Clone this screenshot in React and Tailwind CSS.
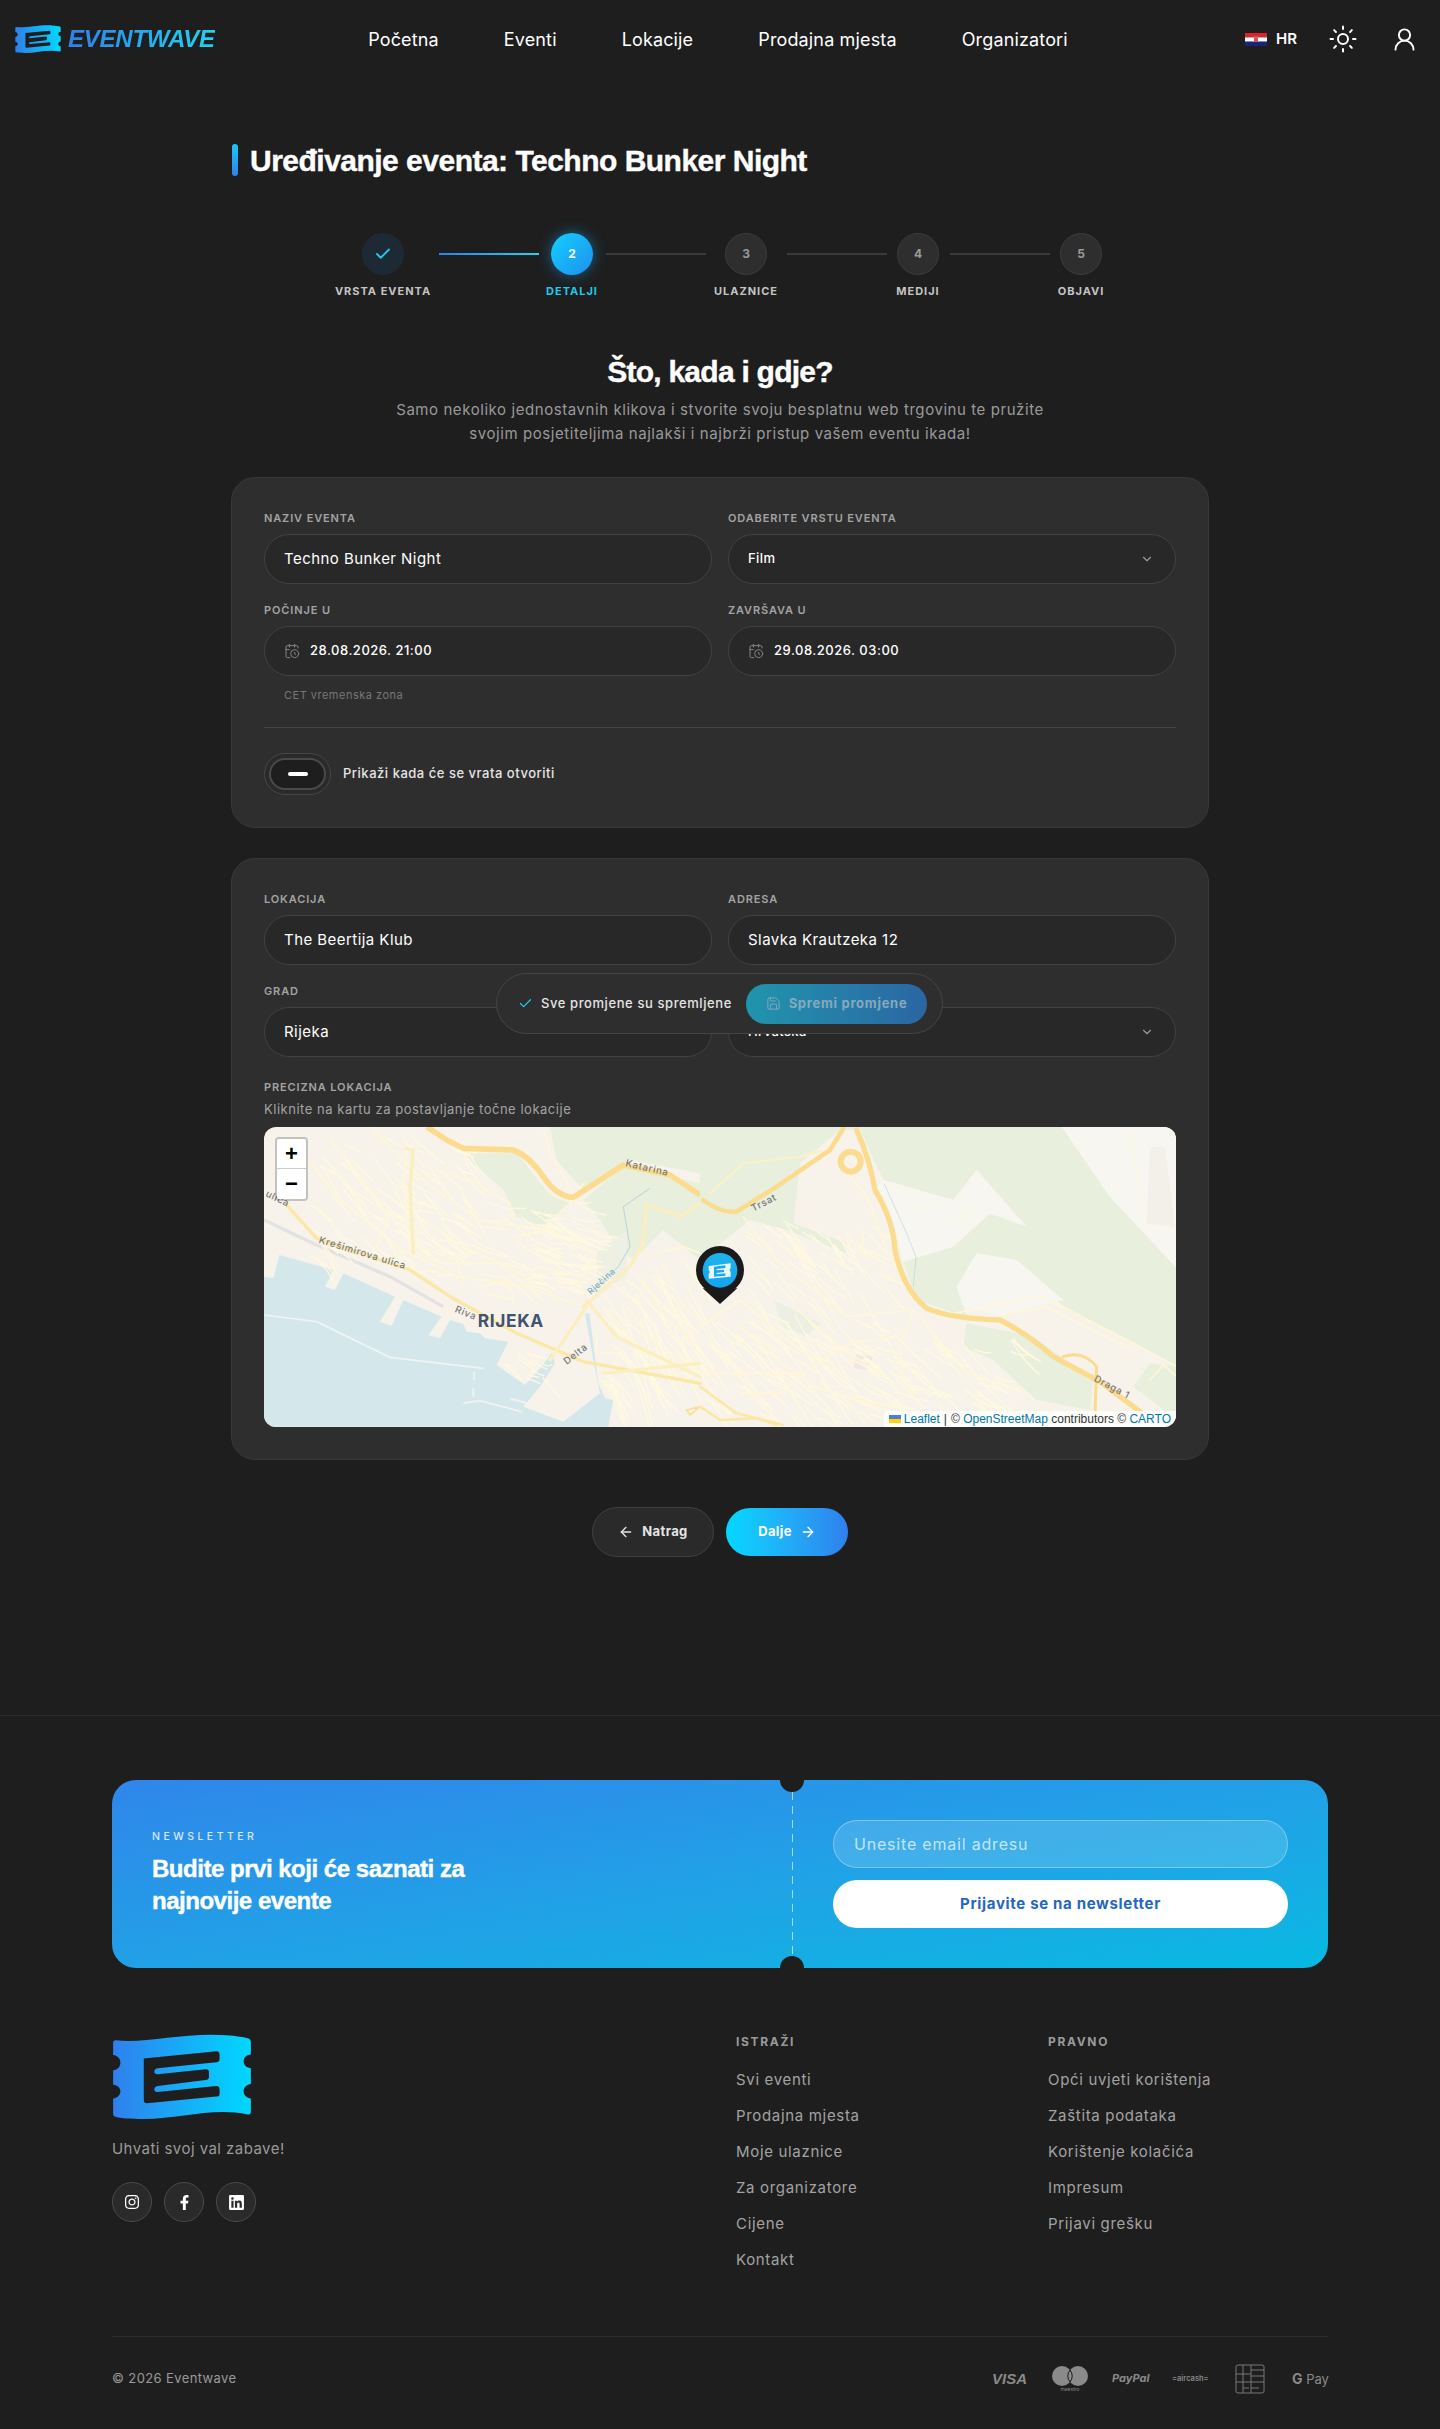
import React from 'react';
import { Sun, UserRound, Check, ChevronDown, CalendarClock, Save, ArrowLeft, ArrowRight } from 'lucide-react';
import { FaInstagram, FaFacebookF, FaLinkedin } from 'react-icons/fa';

const headingFont = "[font-family:'Liberation_Sans',sans-serif] [-webkit-text-stroke:0.4px_white]";

const steps = [
  { label: 'VRSTA EVENTA', state: 'done', width: 'w-[95px]' },
  { label: 'DETALJI', state: 'active', n: 2, width: 'w-[51px]' },
  { label: 'ULAZNICE', n: 3, width: 'w-[65px]' },
  { label: 'MEDIJI', n: 4, width: 'w-[47px]' },
  { label: 'OBJAVI', n: 5, width: 'w-[47px]' },
];

const exploreLinks = ['Svi eventi', 'Prodajna mjesta', 'Moje ulaznice', 'Za organizatore', 'Cijene', 'Kontakt'];
const legalLinks = ['Opći uvjeti korištenja', 'Zaštita podataka', 'Korištenje kolačića', 'Impresum', 'Prijavi grešku'];

// deterministic street scatter for the map drawing
function streets(count, seed, x0, y0, w, h, angle, len) {
  let d = '';
  for (let i = 0; i < count; i++) {
    const r1 = Math.abs(Math.sin(seed + i * 12.9898) * 43758.5453) % 1;
    const r2 = Math.abs(Math.sin(seed + i * 78.233) * 24634.6345) % 1;
    const r3 = Math.abs(Math.sin(seed + i * 37.719) * 14375.8545) % 1;
    const x = x0 + r1 * w;
    const y = y0 + r2 * h;
    const a = angle + (r3 - 0.5) * 0.7;
    const l = len * (0.5 + r3);
    const mx = x + Math.cos(a) * l * 0.5 + (r2 - 0.5) * 18;
    const my = y + Math.sin(a) * l * 0.5 + (r1 - 0.5) * 18;
    d += `M${x.toFixed(0)} ${y.toFixed(0)} Q${mx.toFixed(0)} ${my.toFixed(0)} ${(x + Math.cos(a) * l).toFixed(0)} ${(y + Math.sin(a) * l).toFixed(0)} `;
  }
  return d;
}

function TicketLogo({ id, className }) {
  return (
    <svg viewBox="36 68 420 258" className={className}>
      <defs>
        <linearGradient id={id} x1="0" y1="0" x2="1" y2="0">
          <stop offset="0" stopColor="#2f80ed" />
          <stop offset="1" stopColor="#00d8ff" />
        </linearGradient>
      </defs>
      <path
        fill={`url(#${id})`}
        d="M37 95 Q37 86 46 87 C130 98 260 62 380 72 C410 74 435 78 448 82 Q455 84 455 92 L455 130 C440 132 433 140 433 151 C433 162 440 170 455 172 L455 220 C440 222 433 232 433 242 C433 252 440 262 455 264 L455 305 Q455 314 446 312 C340 290 240 325 130 326 C90 326 60 324 46 320 Q37 318 37 310 L37 264 C52 262 59 252 59 242 C59 232 52 224 37 222 L37 178 C52 176 59 166 59 155 C59 144 52 134 37 132 Z"
      />
      <path
        fill="#1e1e1e"
        d="M130 142 L350 120 Q360 120 360 130 L360 145 Q360 153 350 154 L172 172 Q162 174 162 182 Q162 190 172 190 L318 175 Q328 175 328 185 L328 198 Q328 207 318 208 L172 226 Q162 228 162 236 Q162 245 172 244 L350 226 Q360 226 360 236 L360 250 Q360 258 350 258 L140 278 Q130 278 130 268 Z"
      />
    </svg>
  );
}

function Field({ label, children }) {
  return (
    <div>
      <div className="mb-2 h-4 text-[11px] font-semibold leading-4 tracking-[0.08em] text-[#a3a3a3]">{label}</div>
      {children}
    </div>
  );
}

function Input({ value }) {
  return (
    <div className="flex h-[50px] items-center rounded-full border border-[#424242] bg-[#282828] px-[19px] text-[15px] tracking-[0.03em] text-white">
      {value}
    </div>
  );
}

function Select({ value }) {
  return (
    <div className="flex h-[50px] items-center justify-between rounded-full border border-[#424242] bg-[#282828] pl-[19px] pr-[21px] text-[13px] font-medium tracking-[0.03em] text-white">
      {value}
      <ChevronDown size={14} className="text-[#9a9a9a]" />
    </div>
  );
}

function DateInput({ value }) {
  return (
    <div className="flex h-[50px] items-center gap-[10px] rounded-full border border-[#424242] bg-[#282828] px-[19px] text-[13px] font-medium tracking-[0.04em] text-white">
      <CalendarClock size={16} strokeWidth={1.5} className="text-[#858585]" />
      {value}
    </div>
  );
}

function Stepper() {
  return (
    <div className="mt-[57px] flex justify-center">
      {steps.map((step, i) => (
        <React.Fragment key={step.label}>
          <div className={`flex flex-col items-center ${step.width}`}>
            {step.state === 'done' && (
              <div className="flex h-[42px] w-[42px] items-center justify-center rounded-full bg-[#1d2a35]">
                <Check size={18} strokeWidth={2.5} className="text-[#22c8ee]" />
              </div>
            )}
            {step.state === 'active' && (
              <div className="flex h-[42px] w-[42px] items-center justify-center rounded-full bg-gradient-to-br from-[#14d0ff] to-[#1f8fec] text-xs font-bold text-white shadow-[0_0_14px_rgba(20,160,240,0.55)]">
                {step.n}
              </div>
            )}
            {!step.state && (
              <div className="flex h-[42px] w-[42px] items-center justify-center rounded-full border border-[#3c3c3c] bg-[#2e2e2e] text-xs font-bold text-[#9a9a9a]">
                {step.n}
              </div>
            )}
            <div className={`mt-2 whitespace-nowrap text-[11px] font-bold leading-4 tracking-[0.09em] ${step.state === 'active' ? 'text-[#22c8ee]' : 'text-[#c4c4c4]'}`}>
              {step.label}
            </div>
          </div>
          {i < steps.length - 1 && (
            <div className={`mx-2 mt-[20px] h-[2px] w-[100px] ${i === 0 ? 'bg-gradient-to-r from-[#2f80ed] to-[#22d3ee]' : 'bg-[#3a3a3a]'}`} />
          )}
        </React.Fragment>
      ))}
    </div>
  );
}

// Map tiles drawn by hand, coordinates are in 3x map pixels
function MapDrawing() {
  return (
    <svg viewBox="0 0 912 300" className="block h-full w-full">
      <defs>
        <linearGradient id="pinFill" x1="0" y1="0" x2="0" y2="1">
          <stop offset="0" stopColor="#1fb4ea" />
          <stop offset="1" stopColor="#12a5f0" />
        </linearGradient>
      </defs>
      <rect width="912" height="300" fill="#f7f3ea" />
      <g transform="translate(-14,-7) scale(0.33333)">
        {/* green hills left half */}
        <path fill="#e8efdd" d="M640 100 L800 100 L900 225 L960 250 L880 320 L800 290 L760 210 L680 140 Z" />
        <path fill="#e8efdd" d="M1000 240 L1120 140 L1350 190 L1350 420 L1240 330 L1150 420 L1100 380 L1050 300 Z" />
        <path fill="#e8efdd" d="M900 20 L1350 20 L1350 160 L1140 120 L1000 210 L920 120 Z" />
        <path fill="#edf0e2" d="M1040 400 L1130 330 L1130 470 L1040 520 Z" />
        {/* sea */}
        <path
          fill="#d4e7ea"
          d="M42 470 L70 475 L88 405 L250 450 L225 500 L255 510 L280 460 L435 530 L390 605 L425 618 L460 540 L575 590 L535 645 L570 655 L600 600 L640 612 L650 635 L690 640 L705 655 L775 665 L740 735 L825 795 L870 745 L905 700 L915 730 L870 800 L820 860 L940 905 L1050 820 L1030 720 L1005 580 L1018 580 L1045 790 L1065 835 L1090 840 L1075 920 L42 920 Z"
        />
        <path fill="none" stroke="#eef5f4" strokeWidth="5" d="M42 585 L200 605 L420 712 L700 745" />
        <path fill="none" stroke="#f0f2ee" strokeWidth="6" d="M640 850 L690 842 L815 875 M780 835 L830 850 M672 755 L672 780 M670 805 L670 830" />
        <path fill="none" stroke="#e2e2e2" strokeWidth="10" d="M42 300 L200 375 L420 470 L580 560" />
        {/* minor streets */}
        <g fill="none" stroke="#fff9e0" strokeWidth="4" strokeLinecap="round">
          <path d={streets(90, 3, 180, 40, 480, 380, 0.75, 90)} />
          <path d={streets(60, 7, 480, 230, 520, 260, 0.35, 80)} />
          <path d={streets(40, 11, 820, 300, 220, 220, 0.2, 70)} />
          <path d={streets(95, 17, 1040, 420, 310, 400, 0.95, 110)} />
          <path d={streets(14, 19, 760, 690, 120, 90, 0.5, 50)} />
        </g>
        <g fill="none" stroke="#fff7d8" strokeWidth="5" strokeLinecap="round" strokeLinejoin="round">
          <path d="M170 110 L260 230 L440 380 L620 470 L830 500 L1000 560" />
          <path d="M470 90 L460 200 L480 390 L570 430 L750 430 L880 540" />
          <path d="M360 20 L530 190 L690 300 L870 330 L960 250 L1000 190" />
          <path d="M240 60 L300 130 L420 290 L370 400" />
          <path d="M880 20 L900 100 L970 220" />
          <path d="M520 300 L640 380 L750 430 L830 470" />
          <path d="M510 320 L500 380 L620 420 L640 490" />
          <path d="M800 350 L900 330 L1040 400 L1000 470 L860 440 L830 500" />
          <path d="M560 150 L680 190 L780 250 L790 300" />
          <path d="M690 500 L780 480 L790 540 L710 520" />
          <path d="M1070 570 L1200 720 L1350 800" />
          <path d="M1130 560 L1230 690 L1350 740" />
          <path d="M1180 480 L1250 600 L1350 680" />
          <path d="M1240 440 L1300 560 L1350 600" />
          <path d="M1220 400 L1300 380 L1350 400" />
          <path d="M1040 640 L1040 700 L1110 700" />
        </g>
        {/* bigger roads */}
        <g fill="none" stroke="#fcefbf" strokeWidth="10" strokeLinecap="round" strokeLinejoin="round">
          <path d="M110 255 L200 355 L480 450 L600 530 L800 640 L1000 725 L1350 790" stroke="#fbe8a6" />
          <path d="M1000 560 L1140 440 L1180 370 L1190 255 L1290 290 L1350 250" />
          <path d="M1010 540 L1100 650 L1350 770" />
          <path d="M900 720 L1010 560" />
          <path d="M1060 760 L1350 730" />
          <path d="M470 85 L490 90 L480 200 L490 400" />
          <path d="M1310 870 L1350 860 L1320 885 Z" stroke="#fbdf95" strokeWidth="5" />
        </g>
        <path fill="none" stroke="#fbdc8f" strokeWidth="17" strokeLinejoin="round" d="M530 20 L590 60 L640 85 L790 90 Q840 110 880 170 Q920 230 970 232 L1120 135 L1260 165 L1350 225" />
        <path fill="none" stroke="#b6d3dc" strokeWidth="3" d="M1200 205 L1120 260 L1140 380 L1105 440 L1020 520" />
        <g fontFamily="Inter, sans-serif" fill="#77797c" fontSize="29" letterSpacing="2">
          <text transform="translate(205,368) rotate(17)" fontWeight="500">Krešimirova ulica</text>
          <text transform="translate(45,228) rotate(26)" fontWeight="500">ulica</text>
          <text transform="translate(613,575) rotate(22)" fontWeight="500">Riva</text>
          <text transform="translate(950,735) rotate(-38)" fontWeight="500">Delta</text>
          <text transform="translate(1125,138) rotate(13)" fontWeight="500">Katarina</text>
          <text transform="translate(1022,525) rotate(-42)" fill="#6ea6ba" fontSize="26">Rječina</text>
        </g>
        <text x="683" y="620" fontFamily="Inter, sans-serif" fontWeight="700" fontSize="52" fill="#3f5372" letterSpacing="2">RIJEKA</text>
      </g>
      <g transform="translate(436,-7) scale(0.33333)">
        {/* big forest on the right */}
        <path fill="#e8efdd" d="M0 20 L1085 20 L1230 230 L1430 445 L1430 740 L1300 670 L1100 570 L950 420 L830 400 L770 500 L800 590 L650 540 L610 425 L760 380 L870 280 L980 320 L830 150 L760 240 L550 180 L480 30 L420 30 L300 130 L280 310 L440 370 L440 400 L260 330 L150 300 L0 420 Z" />
        <path fill="#e8efdd" d="M800 610 L1000 650 L1180 780 L1170 870 L1010 840 L880 720 L790 680 Z" />
        <path fill="#f8f6f0" d="M1085 20 L1430 20 L1430 445 L1230 230 Z" />
        <path fill="#f8f6f0" d="M550 180 L760 240 L830 150 L980 320 L870 280 L760 380 L610 425 L590 340 L520 210 Z" />
        <path fill="#f8f6f0" d="M830 400 L950 420 L1090 540 L900 585 L790 560 L770 500 Z" />
        <path fill="#e8efdd" d="M1350 730 L1430 740 L1430 900 L1300 800 Z" />
        <path fill="#f3efe9" d="M1350 80 L1395 80 L1425 320 L1340 310 Z" />
        <path fill="#edefe2" d="M220 540 L360 610 L320 650 L250 620 Z" />
        <path fill="#efe9e2" d="M470 700 L520 710 L500 750 L460 745 Z" />
        {/* streets */}
        <g fill="none" stroke="#fff9e0" strokeWidth="4" strokeLinecap="round">
          <path d={streets(80, 23, 0, 560, 420, 340, 0.7, 110)} />
          <path d={streets(70, 29, 120, 300, 440, 320, 0.75, 80)} />
          <path d={streets(80, 31, 400, 640, 540, 250, 0.55, 90)} />
        </g>
        <g fill="none" stroke="#fff7d8" strokeWidth="5" strokeLinecap="round" strokeLinejoin="round">
          <path d="M0 620 L120 540 L300 690 L420 760" />
          <path d="M130 290 L230 420 L440 590 L640 570" />
          <path d="M0 760 L310 760 L450 670 L590 650" />
          <path d="M310 760 L250 820 L120 820" />
          <path d="M640 570 L600 680 L610 780 L650 840" />
          <path d="M660 590 L800 760 L980 820" />
          <path d="M420 130 L500 230 L560 390 L640 540" />
          <path d="M490 330 L485 400 L550 410" />
          <path d="M760 580 L1030 530 L1300 670 L1430 740" />
          <path d="M900 585 L1040 560 L1280 680" />
          <path d="M120 620 L220 710 L340 800 L560 870" />
          <path d="M400 820 L520 850 L640 870" />
          <path d="M280 560 L420 680 L540 760" />
          <path d="M30 220 L130 130 L300 110 L360 95" stroke="#faf2c9" strokeWidth="7" />
          <path d="M1350 780 L1390 735 L1430 770" />
          <path d="M1290 30 L1330 280" strokeWidth="3" />
          <path d="M640 260 L720 250 L750 300 L820 280" strokeWidth="3" />
        </g>
        <path fill="none" stroke="#b9d5e2" strokeWidth="2" d="M552 190 L620 340 L648 410 L640 500" />
        <g fill="none" stroke="#fbdc8f" strokeLinecap="round" strokeLinejoin="round">
          <path strokeWidth="14" d="M10 240 Q60 280 110 275 L230 200 L390 90 L430 25" />
          <path strokeWidth="16" d="M470 30 Q510 120 525 210 Q580 300 585 390 Q610 510 680 565 Q750 595 900 600 Q980 640 1060 710 L1200 785 L1320 875" />
          <circle cx="452" cy="125" r="30" strokeWidth="18" />
          <path strokeWidth="9" d="M1090 710 Q1150 690 1190 740 L1185 880" />
          <path strokeWidth="8" d="M0 800 L110 880 L250 915" stroke="#fbe8a6" />
          <path strokeWidth="8" d="M0 860 L60 900 L170 895 L230 915" stroke="#fbe8a6" />
        </g>
        <g fontFamily="Inter, sans-serif" fill="#77797c" fontSize="29" fontWeight="500" letterSpacing="2">
          <text transform="translate(160,275) rotate(-27)">Trsat</text>
          <text transform="translate(1180,782) rotate(28)">Draga 1</text>
        </g>
        {/* map pin */}
        <circle cx="60" cy="450" r="72" fill="#1a1a1a" />
        <path d="M8 505 L60 552 L112 505 Z" fill="#1a1a1a" />
        <circle cx="60" cy="451" r="52" fill="url(#pinFill)" />
        <path fill="#e8f6fc" d="M26 438 L92 430 L92 445 Q86 450 92 456 L92 470 L26 476 L26 462 Q32 456 26 450 Z" />
        <path fill="#1ba9ea" d="M42 440 L76 436 L76 444 L50 447 L50 451 L72 449 L72 456 L50 459 L50 463 L76 460 L76 467 L42 470 Z" />
      </g>
    </svg>
  );
}

function MapPanel() {
  return (
    <div className="relative mt-[10px] h-[300px] overflow-hidden rounded-xl">
      <MapDrawing />
      <div className="absolute left-[11px] top-[10px] overflow-hidden rounded-[4px] border-2 border-black/20 bg-clip-padding [font-family:'Liberation_Sans',sans-serif]">
        <div className="flex h-[30px] w-[29px] items-center justify-center border-b border-[#cccccc] bg-white text-[22px] font-bold leading-none text-black">+</div>
        <div className="flex h-[30px] w-[29px] items-center justify-center bg-white text-[22px] font-bold leading-none text-black">−</div>
      </div>
      <div className="absolute bottom-0 right-0 flex h-4 items-center rounded-tl bg-white/80 pl-[5px] pr-[5px] text-xs leading-4 text-[#333333] [font-family:'Liberation_Sans',sans-serif]">
        <svg width="12" height="8" viewBox="0 0 12 8" className="mr-[3px]">
          <rect width="12" height="4" fill="#4c7be1" />
          <rect y="4" width="12" height="4" fill="#ffd500" />
        </svg>
        <span className="text-[#0078a8]">Leaflet</span>
        <span className="mx-[4px]">|</span>©&nbsp;
        <span className="text-[#0078a8]">OpenStreetMap</span>&nbsp;contributors ©&nbsp;
        <span className="text-[#0078a8]">CARTO</span>
      </div>
    </div>
  );
}

function Header() {
  return (
    <header className="grid h-[78px] grid-cols-[1fr_auto_1fr] items-center pl-[15px] pr-[22px]">
      <div className="flex items-center gap-[7px]">
        <TicketLogo id="headerLogo" className="h-[28px] w-[46px]" />
        <span className="bg-gradient-to-r from-[#2f80ed] to-[#22d3ee] bg-clip-text text-2xl font-bold italic tracking-[-0.01em] text-transparent [font-family:'Liberation_Sans',sans-serif]">
          EVENTWAVE
        </span>
      </div>
      <nav className="ml-[3px] flex gap-[65px] text-[18px] tracking-[0.008em] text-white">
        <span>Početna</span>
        <span>Eventi</span>
        <span>Lokacije</span>
        <span>Prodajna mjesta</span>
        <span>Organizatori</span>
      </nav>
      <div className="flex items-center justify-end">
        <svg width="22" height="13" viewBox="0 0 22 13">
          <rect width="22" height="4.4" fill="#e0202c" />
          <rect y="4.4" width="22" height="4.3" fill="#ffffff" />
          <rect y="8.7" width="22" height="4.3" fill="#1a237e" />
          <rect x="9" y="3" width="4" height="6" rx="1" fill="#d0565e" />
        </svg>
        <span className="ml-[9px] text-[15px] font-semibold text-white">HR</span>
        <Sun size={30} strokeWidth={1.6} className="ml-[31px] text-white" />
        <UserRound size={27} strokeWidth={1.7} className="ml-[33px] text-white" />
      </div>
    </header>
  );
}

function Newsletter() {
  return (
    <div className="relative grid h-[188px] grid-cols-[680px_1fr] overflow-hidden rounded-3xl bg-gradient-to-br from-[#2f86ea] to-[#05b9e2]">
      <div className="flex flex-col justify-center pb-[2px] pl-10">
        <div className="text-[10.5px] font-medium tracking-[0.33em] text-white/80">NEWSLETTER</div>
        <div className={`${headingFont} mt-[8px] text-2xl font-bold leading-8 tracking-[-0.02em] text-white`}>
          Budite prvi koji će saznati za
          <br />
          najnovije evente
        </div>
      </div>
      <div className="flex flex-col justify-center gap-3 pl-[41px] pr-10">
        <div className="flex h-12 items-center rounded-full border border-white/30 bg-white/15 px-5 text-[16px] tracking-[0.05em] text-white/70">
          Unesite email adresu
        </div>
        <div className="flex h-12 items-center justify-center rounded-full bg-white text-[15px] font-bold tracking-[0.045em] text-[#2467bd]">
          Prijavite se na newsletter
        </div>
      </div>
      <div className="absolute bottom-3 left-[680px] top-3 w-px bg-[repeating-linear-gradient(to_bottom,rgba(255,255,255,0.6)_0_8px,transparent_8px_14px)]" />
      <div className="absolute left-[668px] top-[-12px] h-6 w-6 rounded-full bg-[#1e1e1e]" />
      <div className="absolute bottom-[-12px] left-[668px] h-6 w-6 rounded-full bg-[#1e1e1e]" />
    </div>
  );
}

function PaymentLogos() {
  return (
    <div className="flex items-center text-[#8a8a8a]">
      <span className="w-[36px] text-[15px] font-extrabold italic leading-none [font-family:'Liberation_Sans',sans-serif]">VISA</span>
      <div className="relative ml-6 flex h-[26px] w-[36px] flex-col items-center">
        <svg width="36" height="20" viewBox="0 0 36 20">
          <circle cx="10" cy="10" r="10" fill="#8a8a8a" />
          <circle cx="26" cy="10" r="10" fill="#8a8a8a" />
          <path d="M18 4 A10 10 0 0 1 18 16 A10 10 0 0 1 18 4" fill="#8a8a8a" stroke="#1e1e1e" strokeWidth="1" />
        </svg>
        <span className="text-[5px] leading-[6px]">maestro</span>
      </div>
      <span className="ml-6 w-[36px] text-[11px] font-bold italic leading-none">PayPal</span>
      <span className="ml-6 w-[36px] whitespace-nowrap text-center text-[7.5px] font-semibold leading-none">=aircash=</span>
      <svg width="30" height="30" viewBox="0 0 30 30" fill="none" stroke="#777777" strokeWidth="1" className="ml-[27px]">
        <rect x="1" y="1" width="28" height="28" rx="2" />
        <path d="M8 1 V29 M16 1 V29 M1 10 H16 M1 18 H29 M16 6 H29 M16 12 H29 M16 24 H24 M8 24 H14" />
      </svg>
      <span className="ml-[27px] w-[36px] whitespace-nowrap text-[13px] leading-none"><b className="text-[14px]">G</b> Pay</span>
    </div>
  );
}

function Footer() {
  return (
    <footer className="border-t border-[#2b2b2b] px-28 pt-16">
      <Newsletter />
      <div className="mt-[66px] grid grid-cols-[624px_312px_1fr]">
        <div>
          <TicketLogo id="footerLogo" className="h-[85px] w-[140px]" />
          <div className="mt-5 text-[15px] leading-5 tracking-[0.03em] text-[#9a9a9a]">Uhvati svoj val zabave!</div>
          <div className="mt-[23px] flex gap-3">
            <div className="flex h-10 w-10 items-center justify-center rounded-full border border-[#4a4a4a] bg-[#2a2a2a] text-white"><FaInstagram size={16} /></div>
            <div className="flex h-10 w-10 items-center justify-center rounded-full border border-[#4a4a4a] bg-[#2a2a2a] text-white"><FaFacebookF size={15} /></div>
            <div className="flex h-10 w-10 items-center justify-center rounded-full border border-[#4a4a4a] bg-[#2a2a2a] text-white"><FaLinkedin size={17} /></div>
          </div>
        </div>
        <div>
          <div className="text-xs font-bold leading-4 tracking-[0.14em] text-[#9a9a9a]">ISTRAŽI</div>
          <div className="mt-5 flex flex-col gap-4 text-[15px] leading-5 tracking-[0.045em] text-[#a3a3a3]">
            {exploreLinks.map((link) => (
              <span key={link}>{link}</span>
            ))}
          </div>
        </div>
        <div>
          <div className="text-xs font-bold leading-4 tracking-[0.14em] text-[#9a9a9a]">PRAVNO</div>
          <div className="mt-5 flex flex-col gap-4 text-[15px] leading-5 tracking-[0.045em] text-[#a3a3a3]">
            {legalLinks.map((link) => (
              <span key={link}>{link}</span>
            ))}
          </div>
        </div>
      </div>
      <div className="mt-[66px] flex h-[84px] items-center justify-between border-t border-[#2b2b2b]">
        <span className="text-[13px] tracking-[0.03em] text-[#9a9a9a]">© 2026 Eventwave</span>
        <PaymentLogos />
      </div>
    </footer>
  );
}

export default function App() {
  return (
    <div className="relative min-h-[2429px] bg-[#1e1e1e] font-['Inter'] text-white">
      <Header />
      <main className="mx-auto w-[978px] pb-[158px] pt-[66px]">
        {/* Title */}
        <div className="ml-px flex h-8 items-center gap-3">
          <div className="h-8 w-[6px] rounded-full bg-gradient-to-b from-[#14c8fb] to-[#2f80ed]" />
          <h1 className={`${headingFont} text-[30px] font-bold tracking-[-0.017em] text-white`}>Uređivanje eventa: Techno Bunker Night</h1>
        </div>

        <Stepper />

        {/* Intro */}
        <h2 className={`${headingFont} mt-[53px] text-center text-[30px] font-bold leading-10 tracking-[-0.025em] text-white`}>Što, kada i gdje?</h2>
        <p className="mt-[6px] text-center text-[15px] leading-6 tracking-[0.038em] text-[#9a9a9a]">
          Samo nekoliko jednostavnih klikova i stvorite svoju besplatnu web trgovinu te pružite
          <br />
          svojim posjetiteljima najlakši i najbrži pristup vašem eventu ikada!
        </p>

        {/* Event details card */}
        <section className="mt-[31px] rounded-3xl border border-[#383838] bg-[#2e2e2e] p-8">
          <div className="grid grid-cols-2 gap-x-4 gap-y-[18px]">
            <Field label="NAZIV EVENTA"><Input value="Techno Bunker Night" /></Field>
            <Field label="ODABERITE VRSTU EVENTA"><Select value="Film" /></Field>
            <Field label="POČINJE U"><DateInput value="28.08.2026. 21:00" /></Field>
            <Field label="ZAVRŠAVA U"><DateInput value="29.08.2026. 03:00" /></Field>
          </div>
          <div className="mt-[11px] pl-5 text-[11px] leading-4 tracking-[0.045em] text-[#777777]">CET vremenska zona</div>
          <div className="mt-6 h-px bg-[#444444]" />
          <div className="mt-[25px] flex items-center gap-3">
            <div className="flex h-[42px] w-[67px] items-center justify-center rounded-full border border-[#464646] bg-[#2a2a2a]">
              <div className="flex h-[32px] w-[57px] items-center justify-center rounded-full border-2 border-[#4a4a4a] bg-[#1e1e1e]">
                <div className="h-1 w-5 rounded-full bg-white" />
              </div>
            </div>
            <span className="text-[13px] font-medium tracking-[0.04em] text-[#e5e5e5]">Prikaži kada će se vrata otvoriti</span>
          </div>
        </section>

        {/* Location card */}
        <section className="mt-[30px] rounded-3xl border border-[#383838] bg-[#2e2e2e] p-8">
          <div className="grid grid-cols-2 gap-x-4 gap-y-[18px]">
            <Field label="LOKACIJA"><Input value="The Beertija Klub" /></Field>
            <Field label="ADRESA"><Input value="Slavka Krautzeka 12" /></Field>
            <Field label="GRAD"><Input value="Rijeka" /></Field>
            <Field label="DRŽAVA"><Select value="Hrvatska" /></Field>
          </div>
          <div className="mt-[22px] text-[11px] font-semibold leading-4 tracking-[0.08em] text-[#a3a3a3]">PRECIZNA LOKACIJA</div>
          <div className="mt-[6px] text-[13px] leading-4 tracking-[0.04em] text-[#a3a3a3]">Kliknite na kartu za postavljanje točne lokacije</div>
          <MapPanel />
        </section>

        {/* Wizard buttons */}
        <div className="mt-[47px] flex items-center justify-center gap-3">
          <div className="flex h-[50px] w-[122px] items-center justify-center gap-2 rounded-full border border-[#404040] bg-[#2a2a2a] text-[13px] font-bold tracking-[0.03em] text-[#e5e5e5]">
            <ArrowLeft size={16} /> Natrag
          </div>
          <div className="flex h-12 w-[122px] items-center justify-center gap-2 rounded-full bg-gradient-to-r from-[#00d8ff] to-[#2f80ed] text-[13px] font-bold tracking-[0.03em] text-white">
            Dalje <ArrowRight size={16} />
          </div>
        </div>
      </main>
      <Footer />

      {/* Floating save bar */}
      <div className="absolute left-[496px] top-[973px] flex h-[61px] w-[447px] items-center rounded-full border border-[#454545] bg-[#2e2e2e] pl-[22px]">
        <Check size={15} strokeWidth={2} className="-ml-px text-[#22c8ee]" />
        <span className="ml-2 text-[13px] font-medium tracking-[0.045em] text-[#e5e5e5]">Sve promjene su spremljene</span>
        <div className="absolute right-[15px] flex h-10 w-[181px] items-center justify-center gap-2 rounded-full bg-gradient-to-r from-[#1f95ac] to-[#2a66a3] text-[13px] font-bold tracking-[0.055em] text-[#86a9bd]">
          <Save size={15} strokeWidth={1.5} /> Spremi promjene
        </div>
      </div>
    </div>
  );
}
